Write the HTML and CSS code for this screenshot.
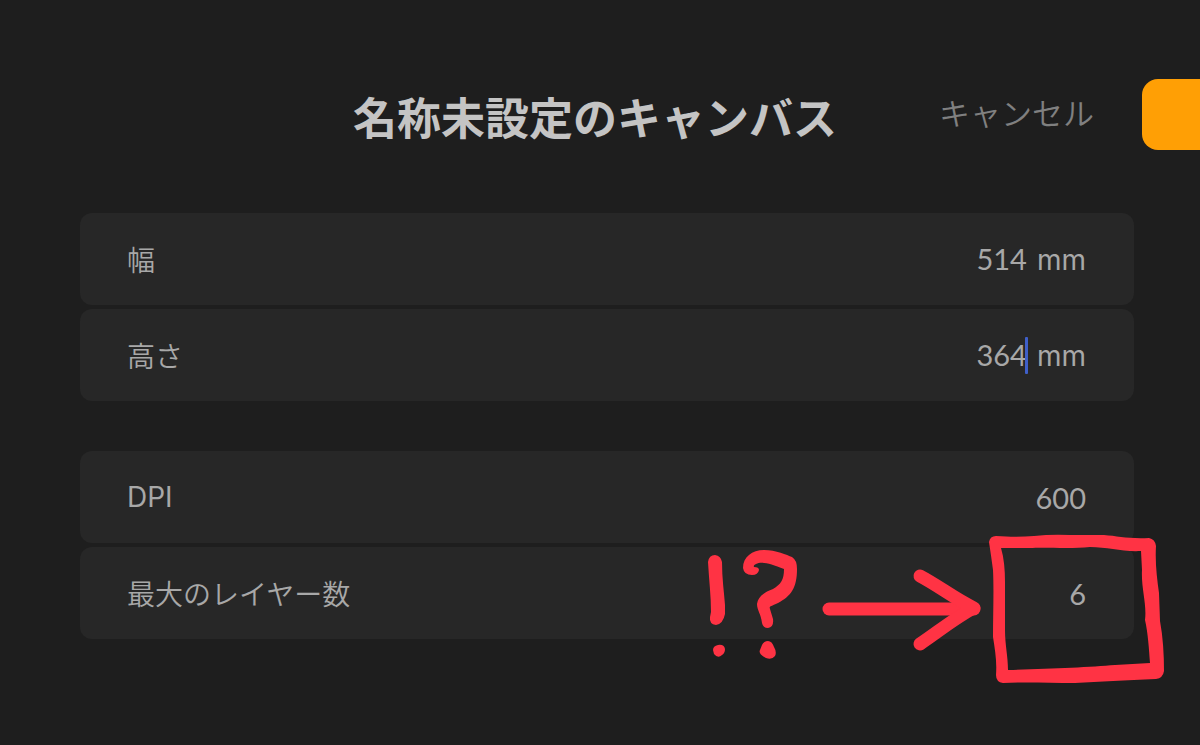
FILE: index.html
```html
<!DOCTYPE html>
<html lang="ja">
<head>
  <meta charset="utf-8">
  <title>名称未設定のキャンバス</title>
  <link rel="stylesheet" href="styles.css">
</head>
<body>

  <form class="canvas-form">
    <header class="header">
      <h1 class="title">名称未設定のキャンバス</h1>
      <div class="actions">
        <button type="button" class="cancel">キャンセル</button>
        <button type="submit" class="create" aria-label="作成"></button>
      </div>
    </header>

    <main class="settings">
      <section class="group">
        <div class="row">
          <label for="width">幅</label>
          <div class="field">
            <input type="text" id="width" value="514">
            <span class="latin">mm</span>
          </div>
        </div>
        <div class="row">
          <label for="height">高さ</label>
          <div class="field">
            <span class="editing"><input type="text" id="height" value="364"></span>
            <span class="latin">mm</span>
          </div>
        </div>
      </section>

      <section class="group">
        <div class="row">
          <label for="dpi" class="latin">DPI</label>
          <div class="field">
            <input type="text" id="dpi" value="600">
          </div>
        </div>
        <div class="row">
          <label for="layers">最大のレイヤー数</label>
          <div class="field">
            <output id="layers">6</output>
          </div>
          <svg class="notes" viewBox="700 530 470 160" aria-hidden="true">
            <!-- exclamation mark -->
            <path class="ink" d="M708 562 Q709 555 715 555 Q721 556 722 562 C722 578 724 592 725 605 L725 614 Q723 624 716 625 Q709 624 710 617 L711 612 C711 596 709 580 708 562 Z"/>
            <path class="ink" d="M713 650 Q713 646 718 645 Q724 644 725 649 Q725 653 722 655 Q718 659 714 654 Z"/>
            <!-- question mark -->
            <path class="ink" d="M743 568 C743 557 752 550 764 550 C776 550 787 555 792 557 Q797 560 797 569 C797 588 791 596 778 603 C770 607 769 606 770 609 L773 619 Q774 627 768 628 Q763 628 762 623 C761 614 757 610 757 604 C758 596 765 592 773 589 C781 584 784 580 784 569 C771 564 762 561 756 564 Q753 565 754 567 Q759 567 759 570 Q758 575 752 575 Q744 575 743 568 Z"/>
            <path class="ink" d="M762 645 Q764 641 768 641 Q772 641 774 647 Q777 652 775 656 Q772 660 766 658 Q758 654 760 650 Z"/>
            <!-- arrow -->
            <path class="stroke" d="M829 609 H974"/>
            <path class="stroke" d="M920 576 C939 586 955 599 974 608 C956 617 938 632 920 644"/>
            <!-- box round the layer count -->
            <path class="ink" fill-rule="evenodd" d="M989 542 Q990 536 996 536 C1010 537 1022 537 1034 536 Q1052 534 1070 535 L1104 535 C1118 536 1128 539 1149 538 Q1155 539 1156 546 C1155 563 1157 578 1159 593 L1160 621 C1163 637 1164 655 1164 671 Q1163 678 1156 679 C1125 680 1100 682 1075 683 C1050 683 1025 682 1003 683 Q996 682 996 675 C997 661 995 650 993 637 C993 615 994 590 993 570 Q991 555 989 542 Z M1001 548 C1004 558 1005 570 1005 582 L1005 630 C1005 645 1008 656 1008 670 C1050 669 1090 667 1115 665 L1150 663 C1149 649 1148 633 1145 620 C1147 604 1141 588 1142 570 L1141 551 C1122 552 1108 547 1090 547 C1070 549 1045 547 1030 548 Z"/>
          </svg>
        </div>
      </section>
    </main>
  </form>

</body>
</html>
```
FILE: styles.css
```css
* {
  box-sizing: border-box;
}

body {
  margin: 0;
  min-height: 100vh;
  background-color: #1e1e1e;
  color: #a8a8a8;
  font-family: Inter, "Noto Sans CJK JP", sans-serif;
  font-size: 28px;
  font-weight: 350;
}

button,
input {
  margin: 0;
  padding: 0;
  border: none;
  background: none;
  color: inherit;
  font: inherit;
}

button {
  cursor: pointer;
}

.canvas-form {
  padding: 79px 0 40px;
}

.header {
  display: grid;
  grid-template-columns: 1fr auto 1fr;
  align-items: center;
  padding-right: 10px;
  overflow: hidden;
}

.title {
  grid-column: 2;
  margin: 0;
  padding-top: 8px;
  color: #c4c4c4;
  font-size: 44px;
  font-weight: 700;
  line-height: 60px;
}

.actions {
  display: flex;
  justify-content: flex-end;
  align-items: center;
  gap: 48px;
}

.cancel {
  padding-bottom: 6px;
  color: #808080;
  font-size: 31px;
  white-space: nowrap;
}

/* runs off the right edge of the window */
.create {
  flex: none;
  width: 140px;
  height: 71px;
  margin-right: -92px;
  border-radius: 16px;
  background-color: #ff9f05;
}

.settings {
  display: flex;
  flex-direction: column;
  gap: 50px;
  margin: 63px 66px 0 80px;
}

.group {
  display: flex;
  flex-direction: column;
  gap: 4px;
}

.row {
  position: relative;
  display: flex;
  justify-content: space-between;
  align-items: center;
  height: 92px;
  padding: 0 48px 0 47px;
  border-radius: 12px;
  background-color: #272727;
}

.field {
  display: flex;
  align-items: baseline;
  gap: 10px;
}

.field input,
.field output {
  width: 120px;
  font-family: Lato, sans-serif;
  font-size: 29px;
  font-weight: 400;
  text-align: right;
}

.latin {
  font-weight: 400;
}

.editing {
  position: relative;
}

/* text cursor */
.editing::after {
  content: "";
  position: absolute;
  top: 0;
  right: -1px;
  width: 3px;
  height: 37px;
  border-radius: 1px;
  background-color: #3f5fc8;
}

.notes {
  position: absolute;
  top: -17px;
  right: -36px;
  width: 470px;
  height: 160px;
  pointer-events: none;
}

.ink {
  fill: #ff3344;
}

.stroke {
  fill: none;
  stroke: #ff3344;
  stroke-width: 13px;
  stroke-linecap: round;
  stroke-linejoin: round;
}
```
